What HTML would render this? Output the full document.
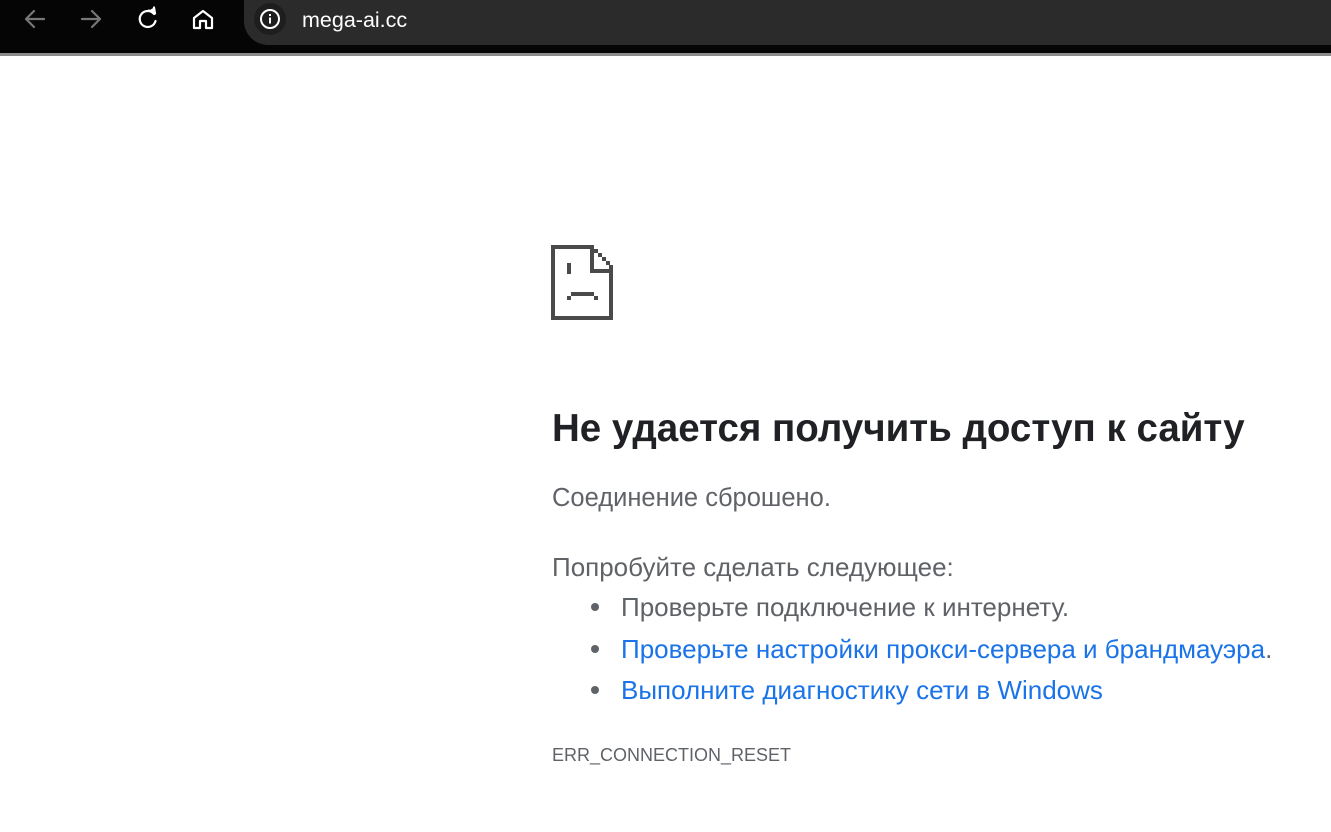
<!DOCTYPE html>
<html><head><meta charset="utf-8"><style>
body{margin:0;width:1331px;height:832px;background:#fff;overflow:hidden;font-family:"Liberation Sans",sans-serif;position:relative}
.bar{position:absolute;left:0;top:0;width:1331px;height:53px;background:#050505;border-bottom:3px solid #8a8a8a}
.addr{position:absolute;left:244px;top:0;width:1100px;height:45px;background:#2b2b2b;border-radius:0 0 0 24px}
.t{position:absolute;white-space:nowrap}
h1{position:absolute;left:552px;top:407px;margin:0;font-size:38.5px;font-weight:bold;color:#202124;white-space:nowrap}
.p{color:#5f6368;font-size:26px}
a{color:#1a73e8;text-decoration:none}
.dot{position:absolute;width:8px;height:8px;border-radius:50%;background:#5f6368}
</style></head><body>
<div class="bar"></div>
<div class="addr"></div>
<svg style="position:absolute;left:0;top:0" width="420" height="45">
<g fill="none" stroke-width="2.2" stroke-linecap="round" stroke-linejoin="round">
<path d="M44 19H26M34 11l-8 8 8 8" stroke="#777"/>
<path d="M82 19h18M92 11l8 8-8 8" stroke="#777"/>
<path d="M154 14a8 8 0 1 0 1.5 7" stroke="#fff"/>
<path d="M149 10.5l6 3-1 -6" stroke="#fff" fill="#fff"/>
<path d="M194 28V18l9-7 9 7v10h-6v-7h-6v7z" stroke="#fff"/>
</g>
<circle cx="270" cy="19" r="16" fill="#1e1e1e"/>
<circle cx="270" cy="19" r="9" fill="none" stroke="#fff" stroke-width="2"/>
<rect x="269" y="17.5" width="2" height="6" fill="#fff"/><rect x="269" y="14" width="2" height="2" fill="#fff"/>
</svg>
<div class="t" style="left:302px;top:8px;color:#fff;font-size:21.5px">mega-ai.cc</div>
<svg style="position:absolute;left:0;top:0" width="700" height="340" fill="#4a4a4a">
<rect x="551" y="245" width="43" height="4"/>
<rect x="551" y="245" width="4" height="75"/>
<rect x="551" y="316" width="62" height="4"/>
<rect x="609" y="265" width="4" height="55"/>
<rect x="590" y="245" width="4" height="28"/>
<rect x="590" y="269" width="23" height="4"/>
<rect x="594" y="249" width="4" height="4"/>
<rect x="598" y="253" width="4" height="4"/>
<rect x="602" y="257" width="4" height="4"/>
<rect x="606" y="261" width="4" height="4"/>
<rect x="567" y="263" width="4" height="11"/>
<rect x="571" y="292" width="23" height="4"/>
<rect x="567" y="296" width="4" height="4"/>
<rect x="594" y="296" width="4" height="4"/>
</svg>
<h1>Не удается получить доступ к сайту</h1>
<div class="t p" style="left:552px;top:484px;font-size:25.5px">Соединение сброшено.</div>
<div class="t p" style="left:552px;top:552px">Попробуйте сделать следующее:</div>
<div class="dot" style="left:591px;top:603px"></div>
<div class="t p" style="left:621px;top:592px">Проверьте подключение к интернету.</div>
<div class="dot" style="left:591px;top:645px"></div>
<div class="t p" style="left:621px;top:634px"><a>Проверьте настройки прокси-сервера и брандмауэра</a>.</div>
<div class="dot" style="left:591px;top:686px"></div>
<div class="t p" style="left:621px;top:675px"><a>Выполните диагностику сети в Windows</a></div>
<div class="t" style="left:552px;top:745px;color:#5f6368;font-size:18px">ERR_CONNECTION_RESET</div>
</body></html>
